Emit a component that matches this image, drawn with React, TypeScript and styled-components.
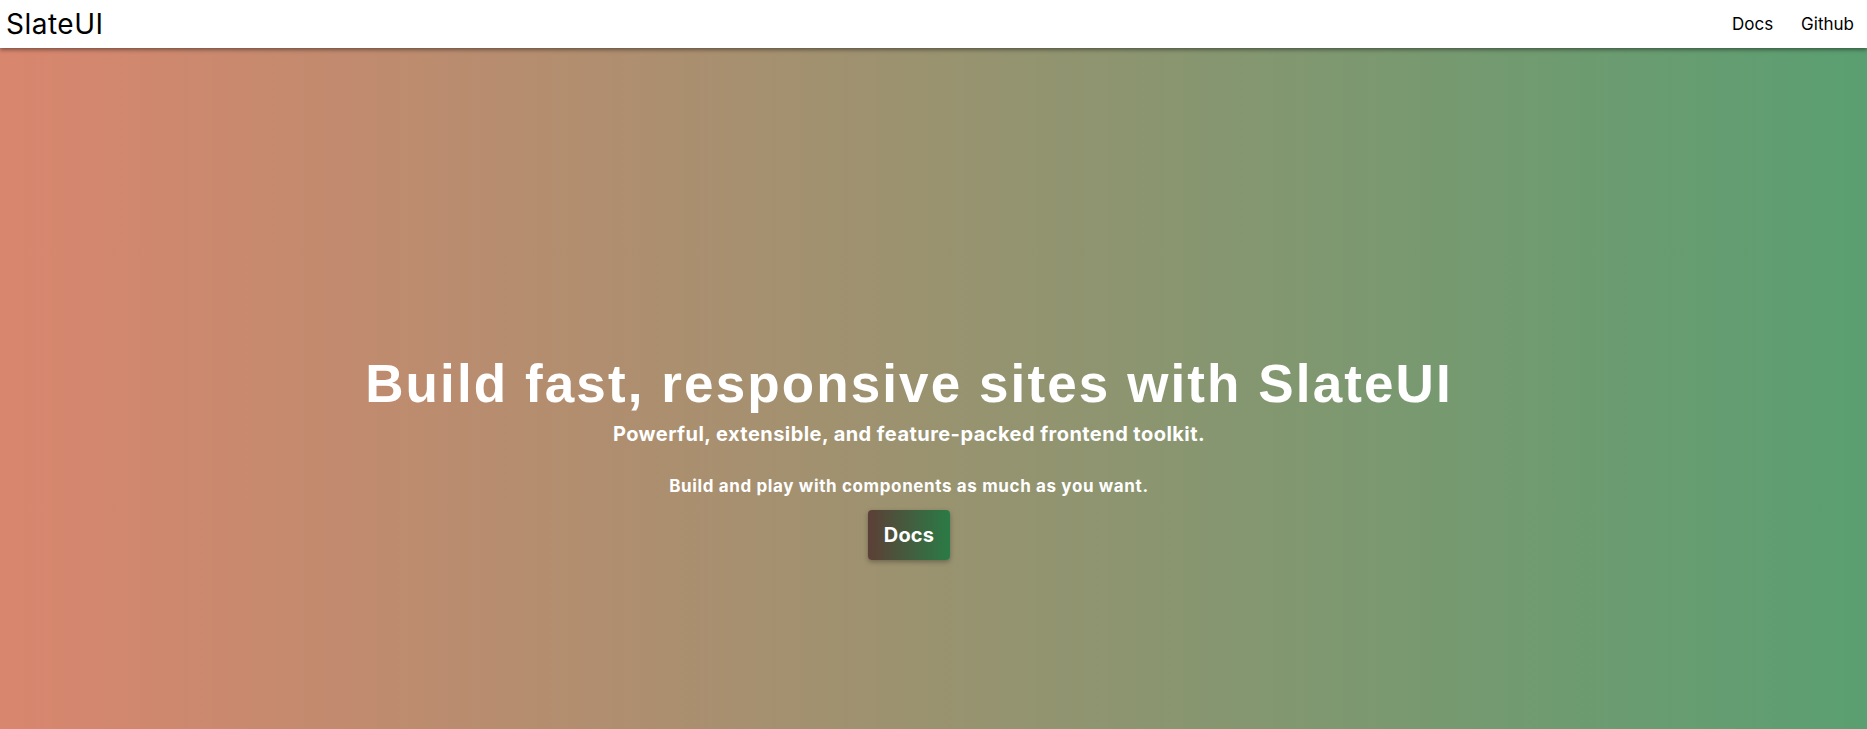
import React from 'react';
import styled, { createGlobalStyle } from 'styled-components';

const GlobalStyle = createGlobalStyle`
  html, body {
    margin: 0;
    padding: 0;
    overflow: hidden;
  }
  body {
    font-family: Inter, "Noto Sans", sans-serif;
  }
`;

const Page = styled.div`
  width: 100%;
  height: 100vh;
  display: flex;
  flex-direction: column;
`;

const Navbar = styled.nav`
  height: 48px;
  flex-shrink: 0;
  display: flex;
  align-items: center;
  justify-content: space-between;
  padding: 0 13px 0 6px;
  background: #fff;
  box-shadow: 0 2px 4px rgba(0, 0, 0, 0.4);
  position: relative;
  z-index: 2;
`;

const Logo = styled.a`
  font-family: Inter, sans-serif;
  font-size: 28px;
  font-weight: 400;
  color: #000;
  text-decoration: none;
  letter-spacing: 0.5px;
`;

const NavLinks = styled.div`
  display: flex;
  gap: 28px;
`;

const NavLink = styled.a`
  font-family: Inter, sans-serif;
  font-size: 17px;
  color: #000;
  text-decoration: none;
`;

const Hero = styled.section`
  flex: 1;
  display: flex;
  flex-direction: column;
  align-items: center;
  padding: 307px 49px 0 0;
  background: linear-gradient(to right, #d9866e, #5a9f71);
  color: #fff;
  text-align: center;
`;

const Heading = styled.h1`
  margin: 0;
  font-family: "Liberation Sans", Arial, sans-serif;
  font-size: 53px;
  font-weight: 700;
  line-height: 57px;
  letter-spacing: 2.1px;
`;

const Tagline = styled.p`
  margin: 10px 0 0;
  font-family: Inter, sans-serif;
  font-size: 20px;
  font-weight: 700;
  line-height: 24px;
  letter-spacing: 0.45px;
`;

const Blurb = styled.p`
  margin: 30px 0 0;
  font-family: Inter, sans-serif;
  font-size: 17px;
  font-weight: 700;
  line-height: 21px;
  letter-spacing: 0.63px;
`;

const DocsButton = styled.a`
  margin-top: 13px;
  display: inline-flex;
  align-items: center;
  justify-content: center;
  height: 50px;
  padding: 0 16px;
  box-sizing: border-box;
  border-radius: 4px;
  background: linear-gradient(to right, #5c3f36, #2a7b46);
  box-shadow: 0 2px 5px rgba(0, 0, 0, 0.3);
  color: #fff;
  font-family: Inter, sans-serif;
  font-size: 20px;
  font-weight: 700;
  letter-spacing: 0.2px;
  text-decoration: none;
`;

const App = () => {
  return (
    <Page>
      <GlobalStyle />
      <Navbar>
        <Logo href="#">SlateUI</Logo>
        <NavLinks>
          <NavLink href="#">Docs</NavLink>
          <NavLink href="#">Github</NavLink>
        </NavLinks>
      </Navbar>
      <Hero>
        <Heading>Build fast, responsive sites with SlateUI</Heading>
        <Tagline>Powerful, extensible, and feature-packed frontend toolkit.</Tagline>
        <Blurb>Build and play with components as much as you want.</Blurb>
        <DocsButton href="#">Docs</DocsButton>
      </Hero>
    </Page>
  );
};

export default App;
